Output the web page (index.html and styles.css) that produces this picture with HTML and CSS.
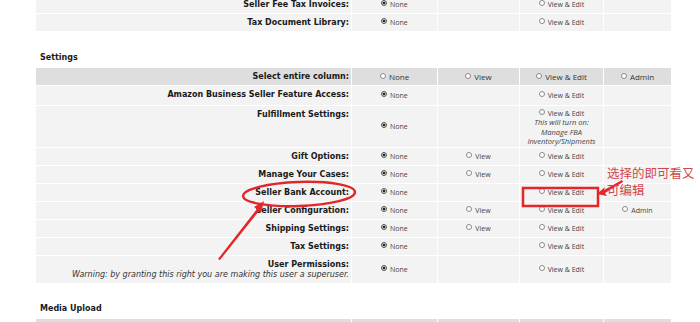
FILE: index.html
```html
<!DOCTYPE html>
<html lang="en">
<head>
    <meta charset="UTF-8">
    <title>User Permissions</title>
    <link rel="stylesheet" href="styles.css">
</head>
<body>

<div class="page">

    <table class="perm-table top-table">
        <colgroup>
            <col class="c-label"><col class="c-none"><col class="c-view"><col class="c-edit"><col class="c-admin">
        </colgroup>
        <tr>
            <td class="label">Seller Fee Tax Invoices:</td>
            <td><label><input type="radio" class="rb" name="t1" checked> None</label></td>
            <td></td>
            <td><label><input type="radio" class="rb" name="t1"> View &amp; Edit</label></td>
            <td></td>
        </tr>
        <tr>
            <td class="label">Tax Document Library:</td>
            <td><label><input type="radio" class="rb" name="t2" checked> None</label></td>
            <td></td>
            <td><label><input type="radio" class="rb" name="t2"> View &amp; Edit</label></td>
            <td></td>
        </tr>
    </table>

    <h3 class="section-title">Settings</h3>

    <table class="perm-table">
        <colgroup>
            <col class="c-label"><col class="c-none"><col class="c-view"><col class="c-edit"><col class="c-admin">
        </colgroup>
        <tr class="head-row">
            <td class="label">Select entire column:</td>
            <td><label><input type="radio" class="rb" name="all"> None</label></td>
            <td><label><input type="radio" class="rb" name="all"> View</label></td>
            <td><label><input type="radio" class="rb" name="all"> View &amp; Edit</label></td>
            <td><label><input type="radio" class="rb" name="all"> Admin</label></td>
        </tr>
        <tr class="row-amazon">
            <td class="label">Amazon Business Seller Feature Access:</td>
            <td><label><input type="radio" class="rb" name="s1" checked> None</label></td>
            <td></td>
            <td><label><input type="radio" class="rb" name="s1"> View &amp; Edit</label></td>
            <td></td>
        </tr>
        <tr class="row-tall">
            <td class="label">Fulfillment Settings:</td>
            <td><label><input type="radio" class="rb" name="s2" checked> None</label></td>
            <td></td>
            <td class="top">
                <label><input type="radio" class="rb" name="s2"> View &amp; Edit</label>
                <div class="note">This will turn on:<br>Manage FBA<br>Inventory/Shipments</div>
            </td>
            <td></td>
        </tr>
        <tr>
            <td class="label">Gift Options:</td>
            <td><label><input type="radio" class="rb" name="s3" checked> None</label></td>
            <td><label><input type="radio" class="rb" name="s3"> View</label></td>
            <td><label><input type="radio" class="rb" name="s3"> View &amp; Edit</label></td>
            <td></td>
        </tr>
        <tr>
            <td class="label">Manage Your Cases:</td>
            <td><label><input type="radio" class="rb" name="s4" checked> None</label></td>
            <td><label><input type="radio" class="rb" name="s4"> View</label></td>
            <td><label><input type="radio" class="rb" name="s4"> View &amp; Edit</label></td>
            <td></td>
        </tr>
        <tr>
            <td class="label">Seller Bank Account:</td>
            <td><label><input type="radio" class="rb" name="s5" checked> None</label></td>
            <td></td>
            <td><label><input type="radio" class="rb" name="s5"> View &amp; Edit</label></td>
            <td></td>
        </tr>
        <tr>
            <td class="label">Seller Configuration:</td>
            <td><label><input type="radio" class="rb" name="s6" checked> None</label></td>
            <td><label><input type="radio" class="rb" name="s6"> View</label></td>
            <td><label><input type="radio" class="rb" name="s6"> View &amp; Edit</label></td>
            <td><label><input type="radio" class="rb" name="s6"> Admin</label></td>
        </tr>
        <tr>
            <td class="label">Shipping Settings:</td>
            <td><label><input type="radio" class="rb" name="s7" checked> None</label></td>
            <td><label><input type="radio" class="rb" name="s7"> View</label></td>
            <td><label><input type="radio" class="rb" name="s7"> View &amp; Edit</label></td>
            <td></td>
        </tr>
        <tr>
            <td class="label">Tax Settings:</td>
            <td><label><input type="radio" class="rb" name="s8" checked> None</label></td>
            <td></td>
            <td><label><input type="radio" class="rb" name="s8"> View &amp; Edit</label></td>
            <td></td>
        </tr>
        <tr class="row-perm">
            <td class="label">User Permissions:<div class="warning">Warning: by granting this right you are making this user a superuser.</div></td>
            <td><label><input type="radio" class="rb" name="s9" checked> None</label></td>
            <td></td>
            <td><label><input type="radio" class="rb" name="s9"> View &amp; Edit</label></td>
            <td></td>
        </tr>
    </table>

    <h3 class="section-title media-title">Media Upload</h3>

    <table class="perm-table">
        <colgroup>
            <col class="c-label"><col class="c-none"><col class="c-view"><col class="c-edit"><col class="c-admin">
        </colgroup>
        <tr class="head-row">
            <td class="label"></td>
            <td></td><td></td><td></td><td></td>
        </tr>
    </table>

</div>

<!-- red markup drawn over the screenshot -->
<svg class="markup" width="700" height="322" viewBox="0 0 700 322">
    <ellipse cx="299" cy="194" rx="56" ry="12" fill="none" stroke="#e3262a" stroke-width="2.5" transform="rotate(-2 299 194)"/>
    <polygon points="218,259 257,209 254,207 264,201 261,213 259,211 220,260" fill="#e3262a"/>
    <rect x="523" y="188" width="75" height="18" fill="none" stroke="#e3262a" stroke-width="2.5"/>
    <polygon points="622,180 604,190 605,187 597,194 607,196 605,193 623,182" fill="#e3262a"/>
</svg>
<div class="markup-note">
    <div class="note-line">选择的即可看又</div>
    <div class="note-line">可编辑</div>
</div>

</body>
</html>
```

FILE: styles.css
```css
body {
    margin: 0;
    padding: 0;
    background-color: #fff;
    color: #222;
    font-family: "DejaVu Sans", Verdana, sans-serif;
    overflow: hidden;
}

.page {
    width: 637px;
    padding-left: 35px;
}

.perm-table {
    width: 637px;
    table-layout: fixed;
    border-collapse: separate;
    border-spacing: 1px;
}

.top-table {
    margin-top: -5px;
}

.c-label { width: 315px; }
.c-none { width: 85px; }
.c-view { width: 81px; }
.c-edit { width: 83px; }
.c-admin { width: 67px; }

.perm-table td {
    background-color: #f3f3f3;
    height: 17px;
    padding: 0;
    text-align: center;
    vertical-align: middle;
    font-family: "Open Sans", sans-serif;
    font-size: 7px;
    color: #444;
    line-height: 9px;
}

.perm-table td.label {
    text-align: right;
    vertical-align: top;
    padding: 4px 2px 0 0;
    height: 13px;
    font-family: "DejaVu Sans", Verdana, sans-serif;
    font-weight: bold;
    font-size: 8px;
    line-height: 10px;
    color: #1a1a1a;
}

.perm-table td.top {
    vertical-align: top;
    padding-top: 3px;
}

.head-row td {
    background-color: #dedede;
    font-size: 8px;
    color: #333;
}

.row-amazon td { height: 19px; }
.row-amazon td.label { height: 15px; }

.row-tall td { height: 41px; }
.row-tall td.label { height: 37px; }
.row-tall td.top { height: 38px; }

.row-perm td { height: 27px; }
.row-perm td.label { height: 23px; }

.note {
    font-style: italic;
    font-size: 7.5px;
    line-height: 9.5px;
}

.warning {
    font-family: "DejaVu Sans", Verdana, sans-serif;
    font-weight: normal;
    font-style: italic;
    font-size: 8px;
    line-height: 9px;
    color: #333;
}

label {
    white-space: nowrap;
}

.rb {
    -webkit-appearance: none;
    appearance: none;
    width: 6px;
    height: 6px;
    margin: 0 1px 0 0;
    border: 1px solid #8a8a8a;
    border-radius: 50%;
    background-color: #fff;
    vertical-align: 1px;
}

.rb:checked {
    background: radial-gradient(circle, #222 0, #222 45%, #fff 60%);
    border-color: #555;
}

.section-title {
    margin: 21px 0 4px 5px;
    font-size: 8px;
    line-height: 10px;
    font-weight: bold;
    color: #1a1a1a;
}

.media-title {
    margin-top: 20px;
}

/* Annotation layer */
.markup {
    position: absolute;
    top: 0;
    left: 0;
    pointer-events: none;
}

.markup-note {
    position: absolute;
    top: 165px;
    left: 607px;
    display: flex;
    flex-direction: column;
    gap: 2px;
    font-family: "Noto Sans CJK SC", sans-serif;
    font-size: 12.5px;
    line-height: 15px;
    color: #d2474b;
    white-space: nowrap;
}
```
